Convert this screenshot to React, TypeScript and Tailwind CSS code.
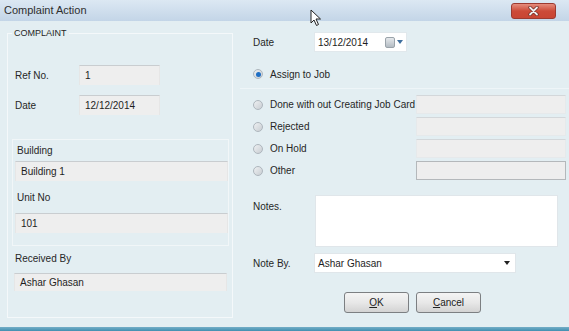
import React from "react";

function Radio({ checked }: { checked?: boolean }) {
  return (
    <span className="w-[10px] h-[10px] rounded-full border border-[#aeb6bd] bg-gradient-to-br from-[#eef0f2] to-[#c9ced3] flex items-center justify-center shrink-0">
      {checked && <span className="w-[5px] h-[5px] rounded-full bg-[#1f6fc4]" />}
    </span>
  );
}

function GrayBox({ value, className }: { value?: string; className: string }) {
  return (
    <div className={`bg-[#eeeeee] border-t border-t-[#c9cdd0] border-x border-x-[#e6e6e6] flex items-center pl-[5px] text-[#1e1e1e] ${className}`}>
      {value}
    </div>
  );
}

const options = ["Done with out Creating Job Card", "Rejected", "On Hold", "Other"];

export default function App() {
  return (
    <div className="relative w-[569px] h-[331px] bg-[#e3eef2] flex flex-col font-['Liberation_Sans',Arial,sans-serif] text-[10px] text-[#262626] overflow-hidden">
      {/* Title bar */}
      <div className="h-[21px] bg-gradient-to-b from-[#dce8f3] to-[#c3d5e7] flex items-center justify-between pl-[4px] pr-[13px] shrink-0">
        <span className="text-[11px] text-[#2e2e2e]">Complaint Action</span>
        <div className="w-[45px] h-[16px] rounded-[3px] border border-[#9c3a30] bg-gradient-to-b from-[#e58c7c] via-[#cc4a38] to-[#c94533] flex items-center justify-center">
          <svg width="11" height="10" viewBox="0 0 11 10">
            <path d="M2 1.5 L9 8.5 M9 1.5 L2 8.5" stroke="#6b2b24" strokeWidth="3.2" strokeLinecap="round" />
            <path d="M2 1.5 L9 8.5 M9 1.5 L2 8.5" stroke="#f2eeee" strokeWidth="1.8" strokeLinecap="round" />
          </svg>
        </div>
      </div>

      {/* Body */}
      <div className="flex-1 flex">
        <fieldset className="ml-[7px] mt-[6px] mb-[9px] w-[226px] border border-[#f4f8fa] flex flex-col">
          <legend className="ml-[4px] px-[2px] text-[9px] leading-[12px] text-[#262626]">COMPLAINT</legend>

          <div className="mt-[26px] flex items-center h-[20px]">
            <span className="w-[71px] pl-[7px]">Ref No.</span>
            <GrayBox value="1" className="w-[81px] h-[20px]" />
          </div>
          <div className="mt-[10px] flex items-center h-[20px]">
            <span className="w-[71px] pl-[7px]">Date</span>
            <GrayBox value="12/12/2014" className="w-[81px] h-[20px]" />
          </div>

          <div className="mt-[24px] ml-[4px] w-[217px] h-[107px] border border-[#f1f6f8] flex flex-col">
            <div className="h-[20px] flex items-center pl-[4px]">Building</div>
            <GrayBox value="Building 1" className="mt-[1px] ml-[2px] w-[213px] h-[20px]" />
            <div className="mt-[6px] h-[20px] flex items-center pl-[4px]">Unit No</div>
            <GrayBox value="101" className="mt-[6px] ml-[2px] w-[213px] h-[20px]" />
          </div>

          <div className="mt-[2px] h-[20px] flex items-center pl-[7px]">Received By</div>
          <GrayBox value="Ashar Ghasan" className="mt-[5px] ml-[6px] w-[213px] h-[18px]" />
        </fieldset>

        <div className="ml-[7px] flex-1 flex flex-col">
          <div className="mt-[11px] h-[20px] flex items-center">
            <span className="w-[74px] pl-[13px]">Date</span>
            <div className="w-[93px] h-[20px] bg-white border border-[#e1e8ec] flex items-center justify-between pl-[3px] pr-[3px] text-[#1e1e1e]">
              <span>13/12/2014</span>
              <span className="flex items-center gap-[2px]">
                <span className="w-[10px] h-[11px] rounded-[2px] border border-[#9aa3aa] bg-gradient-to-b from-[#e6e9ec] to-[#b4bcc3]" />
                <svg width="6" height="4" viewBox="0 0 6 4">
                  <path d="M0 0 H6 L3 4 Z" fill="#3f6f9e" />
                </svg>
              </span>
            </div>
          </div>

          <div className="mt-[13px] h-[18px] flex items-center gap-[7px] pl-[13px]">
            <Radio checked />
            <span>Assign to Job</span>
          </div>

          <div className="mt-[5px] border-t border-[#eef5f8] flex flex-col">
            {options.map((o, i) => (
              <div key={o} className={`${i === 0 ? "mt-[6px]" : "mt-[3px]"} h-[19px] flex items-center pl-[13px] pr-[3px]`}>
                <Radio />
                <span className="ml-[7px] flex-1">{o}</span>
                <div
                  className={`w-[150px] h-[19px] bg-[#eeeeee] border ${
                    i === 3 ? "border-[#b4b8bb]" : "border-[#e6e9eb] border-t-[#d3d7da]"
                  }`}
                />
              </div>
            ))}

            <div className="mt-[15px] flex">
              <span className="w-[75px] pl-[13px] pt-[4px]">Notes.</span>
              <div className="w-[243px] h-[52px] bg-white border border-[#e0e6ea]" />
            </div>

            <div className="mt-[6px] h-[20px] flex items-center">
              <span className="w-[74px] pl-[13px]">Note By.</span>
              <div className="w-[202px] h-[20px] bg-white border border-[#e0e6ea] flex items-center justify-between pl-[3px] pr-[5px] text-[#1e1e1e]">
                <span>Ashar Ghasan</span>
                <svg width="6" height="4" viewBox="0 0 6 4">
                  <path d="M0 0 H6 L3 4 Z" fill="#222" />
                </svg>
              </div>
            </div>

            <div className="mt-[19px] flex gap-[7px] pl-[104px]">
              <button className="w-[65px] h-[21px] rounded-[3px] border border-[#7c7f82] bg-gradient-to-b from-[#f4f4f4] via-[#e8e8e8] to-[#d3d3d3] text-[10px] text-[#222]">
                <span className="underline">O</span>K
              </button>
              <button className="w-[65px] h-[21px] rounded-[3px] border border-[#7c7f82] bg-gradient-to-b from-[#f4f4f4] via-[#e8e8e8] to-[#d3d3d3] text-[10px] text-[#222]">
                <span className="underline">C</span>ancel
              </button>
            </div>
          </div>
        </div>
      </div>

      <div className="h-[4px] bg-gradient-to-b from-[#74aec7] to-[#3f8fb0] shrink-0" />

      {/* mouse pointer */}
      <svg className="absolute left-[310px] top-[9px]" width="12" height="18" viewBox="0 0 12 18">
        <path d="M1 1 L1 14 L4 11 L6.5 16.5 L8.5 15.5 L6 10 L10.5 10 Z" fill="#fff" stroke="#222" strokeWidth="1" />
      </svg>
    </div>
  );
}
